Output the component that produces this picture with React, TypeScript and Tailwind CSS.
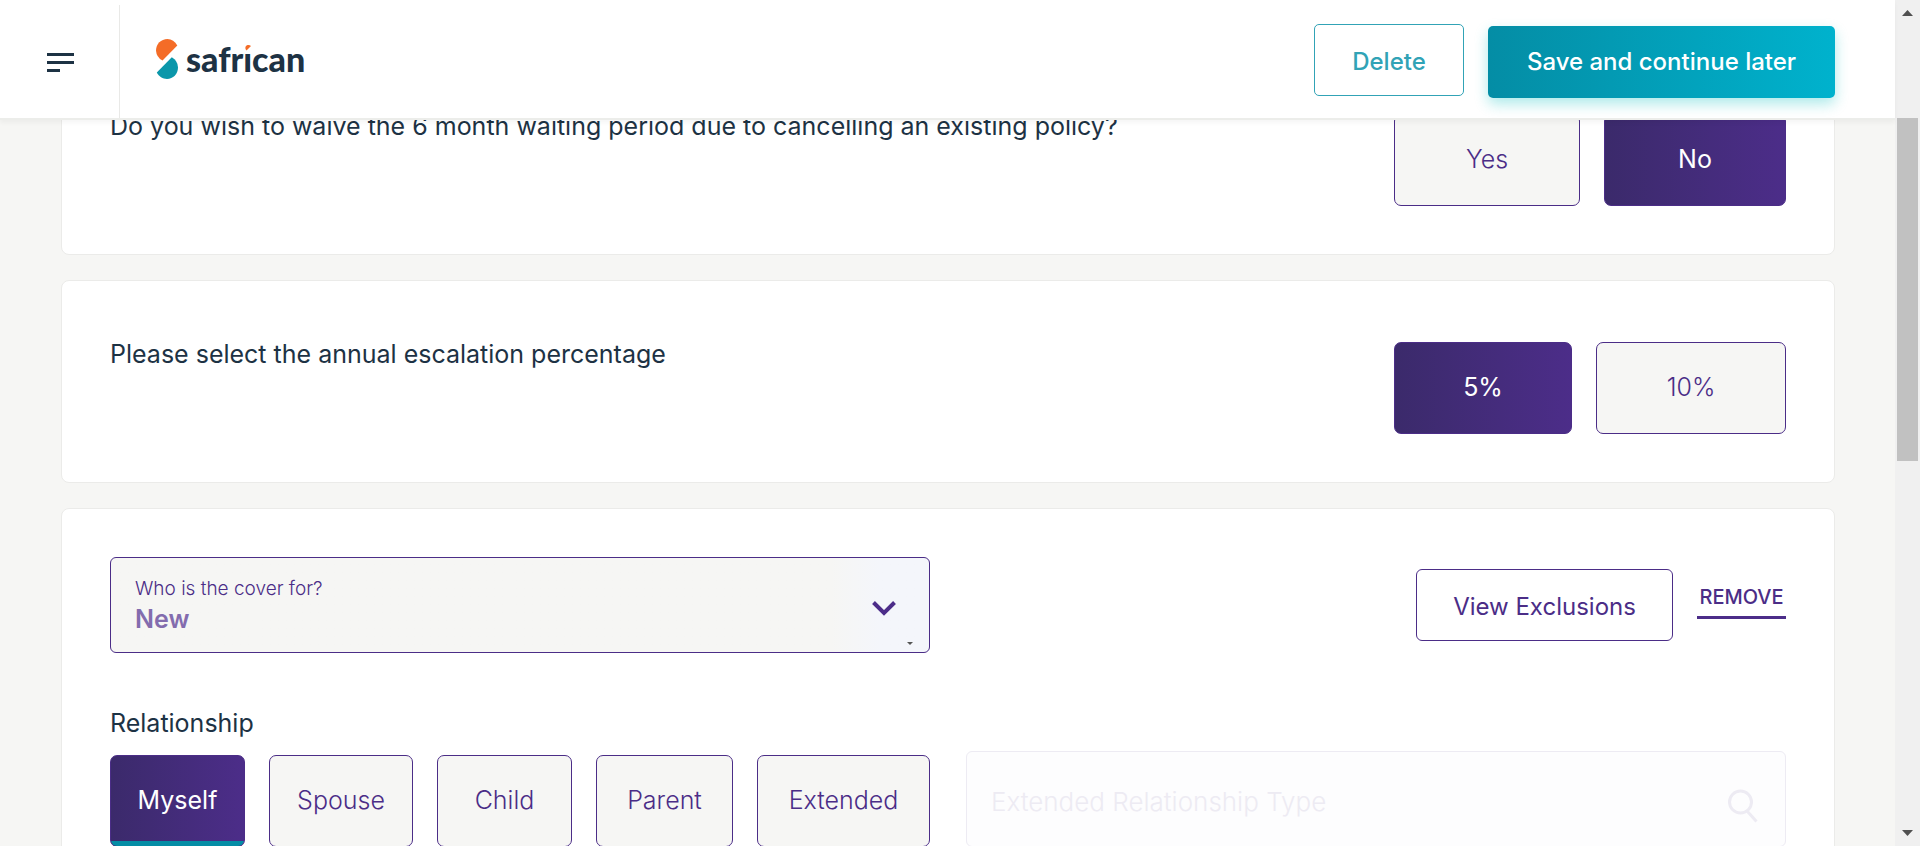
import { useState } from "react";
import type { ReactNode } from "react";

function Logo() {
  return (
    <a href="#home" aria-label="safrican" className="flex items-center gap-2 pl-9">
      <svg width="22" height="40" viewBox="0 0 22 40" aria-hidden="true">
        <path d="M6.5 21.6A12.3 12.3 0 0 1 0 11.5C0 5 5 0 11.5 0 15.600 0 19 2.300 21.300 6.500Z" fill="#f46c27" />
        <path d="M15.800 18.300A12 12 0 0 1 22 28.500C22 35 17 40 11 40 6.600 40 3 37.600 .8 33.600Z" fill="#0b97aa" />
      </svg>
      <span className="font-[Lato] text-[34px] leading-10 font-black text-[#1d3244]">
        safr
        <span className="relative">
          i
          <svg className="absolute top-1 -left-px bg-white" width="12" height="10" viewBox="0 0 12 10" aria-hidden="true">
            <path d="M4.500 8.500C3 7 2.800 4.200 5 3.300 6.500 2.700 8 3.200 9 4Z" fill="#f46c27" />
          </svg>
        </span>
        can
      </span>
    </a>
  );
}

function Header() {
  return (
    <header className="relative z-10 flex h-[120px] shrink-0 items-stretch border-b-2 border-[#ecedea] bg-white shadow-[0_3px_4px_rgba(0,0,0,0.04)]">
      <div className="mt-[5px] flex w-[120px] items-center justify-center border-r border-[#e9e9e7] pt-0.5 pl-0.5">
        <button type="button" aria-label="Menu" className="flex w-[27px] flex-col gap-[5px]">
          <span className="h-[3px] w-full bg-[#1d3244]" />
          <span className="h-[3px] w-full bg-[#1d3244]" />
          <span className="h-[3px] w-[13px] bg-[#1d3244]" />
        </button>
      </div>
      <div className="flex flex-1 items-center justify-between pr-[60px]">
        <Logo />
        <div className="flex items-start gap-6 pt-1">
          <button type="button" className="h-[72px] w-[150px] rounded-[5px] border border-[#31a3b6] pt-1 text-2xl font-medium text-[#31a3b6]">
            Delete
          </button>
          <button
            type="button"
            className="mt-0.5 h-[72px] w-[347px] rounded-[5px] bg-linear-to-r from-[#048da5] to-[#00b2cd] text-2xl font-medium text-white shadow-[0_6px_14px_rgba(0,190,190,0.32)]"
          >
            Save and continue later
          </button>
        </div>
      </div>
    </header>
  );
}

function Card({ children }: { children: ReactNode }) {
  return <section className="rounded-lg border border-[#ebebe9] bg-white p-12">{children}</section>;
}

type ChoiceProps = { label: string; selected: boolean; onSelect: () => void; size: string; marked?: boolean };

function Choice({ label, selected, onSelect, size, marked }: ChoiceProps) {
  const tone = selected
    ? "bg-linear-to-r from-[#3b2a6b] to-[#4c2d89] text-white"
    : "bg-[#f6f6f4] font-light text-[#4b2d87]";
  return (
    <button
      type="button"
      aria-pressed={selected}
      onClick={onSelect}
      className={`relative h-[92px] overflow-hidden rounded-[7px] border border-[#4b2d87] text-[25px] ${size} ${tone}`}
    >
      {label}
      {marked && selected && <span className="absolute inset-x-0 -bottom-px h-1.5 bg-[#048da5]" />}
    </button>
  );
}

type QuestionProps = { text: string; options: { label: string; size: string }[]; initial: string };

function Question({ text, options, initial }: QuestionProps) {
  const [value, setValue] = useState(initial);
  return (
    <Card>
      <div className="flex items-start justify-between pt-[13px]">
        <p className="text-[25px] leading-6">{text}</p>
        <div className="flex gap-6" role="group" aria-label={text}>
          {options.map((o) => (
            <Choice key={o.label} label={o.label} size={o.size} selected={value === o.label} onSelect={() => setValue(o.label)} />
          ))}
        </div>
      </div>
    </Card>
  );
}

const relationships = [
  { label: "Myself", size: "w-[135px]" },
  { label: "Spouse", size: "w-36" },
  { label: "Child", size: "w-[135px]" },
  { label: "Parent", size: "w-[137px]" },
  { label: "Extended", size: "w-[173px]" },
];

function Cover() {
  const [relationship, setRelationship] = useState("Myself");
  return (
    <Card>
      <div className="grid grid-cols-2 gap-x-9">
        <div className="relative flex h-24 flex-col justify-center rounded-md border border-[#4b2d87] bg-[#f6f6f4] bg-linear-to-r from-[#f6f6f4] from-88% to-[#f4f6fb] to-94% px-6">
          <label htmlFor="cover" className="text-[19px] leading-7 font-light text-[#4b2d87]">
            Who is the cover for?
          </label>
          <select id="cover" className="h-8 w-full appearance-none bg-transparent text-[25px] leading-8 font-semibold text-[#836cae] outline-none">
            <option>New</option>
          </select>
          <svg className="pointer-events-none absolute top-[42px] right-8" width="26" height="18" viewBox="0 0 26 18" aria-hidden="true">
            <path d="M2.500 2.500 13 13 23.500 2.500" fill="none" stroke="#4c2d89" strokeWidth="4" />
          </svg>
          <svg className="pointer-events-none absolute right-4 bottom-[7px]" width="6" height="3" viewBox="0 0 6 3" aria-hidden="true">
            <path d="M0 0H6L3 3Z" fill="#555" />
          </svg>
        </div>
        <div className="flex items-start justify-end gap-6 pt-3">
          <button type="button" className="h-[72px] w-[257px] rounded-md border border-[#4b2d87] pt-1 text-2xl text-[#4b2d87]">
            View Exclusions
          </button>
          <button type="button" className="mt-4 w-[89px] border-b-[3px] border-[#4c2d89] pb-[7px] text-xl leading-6 font-medium text-[#4b2d87]">
            REMOVE
          </button>
        </div>
      </div>
      <div className="mt-14 grid grid-cols-2 items-end gap-x-9">
        <div>
          <p className="mb-[18px] text-[25px] leading-7">Relationship</p>
          <div className="flex justify-between" role="group" aria-label="Relationship">
            {relationships.map((r) => (
              <Choice
                key={r.label}
                label={r.label}
                size={r.size}
                marked
                selected={relationship === r.label}
                onSelect={() => setRelationship(r.label)}
              />
            ))}
          </div>
        </div>
        <div className="relative">
          <input
            type="text"
            disabled
            aria-label="Extended Relationship Type"
            placeholder="Extended Relationship Type"
            className="block h-24 w-full rounded-md border border-[#edebf3] bg-[#fdfdfe] px-6 pt-1 text-[26px] font-light placeholder:text-[#edebf3] placeholder:opacity-100"
          />
          <svg className="absolute top-[38px] right-7" width="30" height="34" viewBox="0 0 30 34" aria-hidden="true" fill="none" stroke="#edebf3" strokeWidth="3">
            <circle cx="12.500" cy="13" r="11" />
            <path d="M19 22 28.500 32.500" />
          </svg>
        </div>
      </div>
    </Card>
  );
}

function ScrollBar() {
  return (
    <div aria-hidden="true" className="flex w-[25px] shrink-0 flex-col items-center bg-[#f0f0f0] pt-2.5 pb-2.5">
      <svg width="11" height="6" viewBox="0 0 11 6">
        <path d="M0 6 5.500 0 11 6Z" fill="#505050" />
      </svg>
      <div className="mt-[102px] h-[343px] w-[21px] bg-[#c1c1c1]" />
      <svg className="mt-auto" width="11" height="6" viewBox="0 0 11 6">
        <path d="M0 0 5.500 6 11 0Z" fill="#505050" />
      </svg>
    </div>
  );
}

export default function App() {
  return (
    <div className="flex h-screen overflow-hidden bg-[#f6f6f4] font-[Inter,sans-serif] text-[#1d3244]">
      <div className="flex min-w-0 flex-1 flex-col">
        <Header />
        <main className="-mt-17 flex flex-col gap-[25px] pr-[60px] pl-[61px]">
          <Question
            text="Do you wish to waive the 6 month waiting period due to cancelling an existing policy?"
            options={[
              { label: "Yes", size: "w-[186px]" },
              { label: "No", size: "w-[182px]" },
            ]}
            initial="No"
          />
          <Question
            text="Please select the annual escalation percentage"
            options={[
              { label: "5%", size: "w-[178px]" },
              { label: "10%", size: "w-[190px]" },
            ]}
            initial="5%"
          />
          <Cover />
        </main>
      </div>
      <ScrollBar />
    </div>
  );
}
